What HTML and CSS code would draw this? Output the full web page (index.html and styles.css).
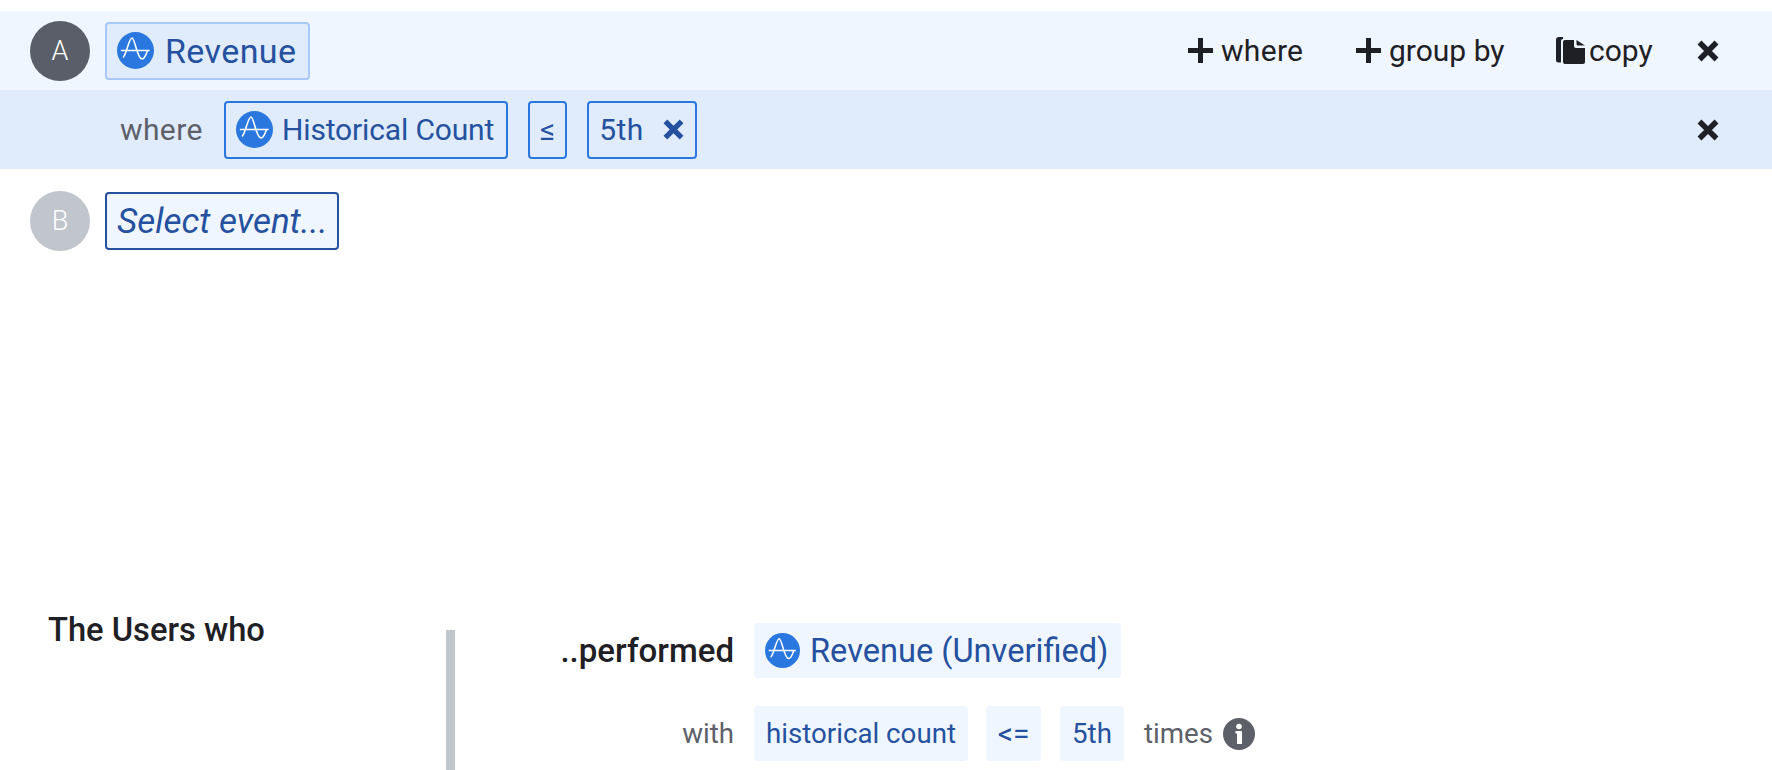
FILE: index.html
```html
<!DOCTYPE html>
<html lang="en">
<head>
  <meta charset="UTF-8" />
  <title>Segment</title>
  <link rel="stylesheet" href="styles.css">
</head>
<body>

  <svg class="defs" width="0" height="0" aria-hidden="true">
    <symbol id="logo" viewBox="0 0 37 37">
      <circle cx="18.500" cy="18.500" r="18.500" fill="#2a77e0" />
      <path d="M4.500 18.500H32M6.500 25C9.500 22 12 6 15 6C18 6 20 27 25 27C27.500 27 29 23 30.500 18.500" fill="none" stroke="#fff" stroke-width="1.600" stroke-linecap="round" />
    </symbol>
    <symbol id="plus" viewBox="0 0 25 25">
      <path d="M12.500 0v25M0 12.500h25" fill="none" stroke="currentColor" stroke-width="5" />
    </symbol>
    <symbol id="cross" viewBox="0 0 22 22">
      <path d="M2.500 2.500l17 17M19.500 2.500l-17 17" fill="none" stroke="currentColor" stroke-width="5.500" />
    </symbol>
    <symbol id="copy" viewBox="0 0 29 27">
      <path d="M7 0H3Q0 0 0 3v20q0 2.500 2.500 2.500H5V4q0-2 2-2z" fill="currentColor" />
      <path d="M9 3h9v6q0 2 2 2h9v14q0 2-2 2H9q-2 0-2-2V5q0-2 2-2zM20.500 3L29 8.500h-7q-1.500 0-1.500-1.500z" fill="currentColor" />
    </symbol>
  </svg>

  <main>

    <section class="row row-event">
      <span class="letter letter-a">A</span>
      <button type="button" class="chip chip-active">
        <svg class="logo"><use href="#logo" /></svg>Revenue
      </button>
      <div class="actions">
        <span class="action action-where"><svg class="plus"><use href="#plus" /></svg>where</span>
        <span class="action action-group"><svg class="plus"><use href="#plus" /></svg>group by</span>
        <span class="action action-copy"><svg class="copy"><use href="#copy" /></svg>copy</span>
        <svg class="cross"><use href="#cross" /></svg>
      </div>
    </section>

    <section class="row row-where">
      <span class="where-label">where</span>
      <button type="button" class="chip chip-small chip-prop">
        <svg class="logo"><use href="#logo" /></svg>Historical Count
      </button>
      <button type="button" class="chip chip-small chip-op">≤</button>
      <button type="button" class="chip chip-small chip-value">
        5th<svg class="cross-small"><use href="#cross" /></svg>
      </button>
      <svg class="cross cross-end"><use href="#cross" /></svg>
    </section>

    <section class="row-empty">
      <span class="letter letter-b">B</span>
      <button type="button" class="chip chip-select">Select event...</button>
    </section>

    <section class="summary">
      <h2>The Users who</h2>
      <div class="rule"></div>
      <div class="summary-rows">
        <div class="summary-row">
          <strong>..performed</strong>
          <span class="tag tag-event"><svg class="logo"><use href="#logo" /></svg>Revenue (Unverified)</span>
        </div>
        <div class="summary-row summary-row-small">
          <span class="muted">with</span>
          <span class="tag tag-prop">historical count</span>
          <span class="tag tag-op">&lt;=</span>
          <span class="tag tag-value">5th</span>
          <span class="muted">times</span>
          <svg class="info" viewBox="0 0 32 32">
            <circle cx="16" cy="16" r="16" fill="#5d6068" />
            <circle cx="16" cy="8.500" r="2.800" fill="#fff" />
            <path d="M12.500 13h5.500q1 0 1 1v12h-5V15.500h-1.500z" fill="#fff" />
          </svg>
        </div>
      </div>
    </section>

  </main>

</body>
</html>
```

FILE: styles.css
```css
* {
  box-sizing: border-box;
}

html, body {
  height: 770px;
  margin: 0;
  overflow: hidden;
  background: #fff;
}

body {
  --ink: #1e2025;
  --muted: #5d6068;
  --blue: #25519f;
  --blue-line: #2a77e0;

  color: var(--ink);
  font-family: Roboto, "Liberation Sans", sans-serif;
  font-size: 30px;
}

.defs {
  position: absolute;
}

button {
  font: inherit;
  cursor: pointer;
}

.row {
  display: flex;
  align-items: center;
  height: 79px;
}

.row-event {
  margin-top: 11px;
  padding-left: 30px;
  background: #eff6ff;
}

.row-where {
  padding-left: 120px;
  background: #e0ecfc;
}

.row-empty {
  display: flex;
  align-items: center;
  margin-top: 22px;
  padding-left: 30px;
}

.letter {
  display: flex;
  align-items: center;
  justify-content: center;
  width: 60px;
  height: 60px;
  border-radius: 50%;
  color: #fff;
  font-size: 27px;
  font-weight: 300;
}

.letter-a { background: #5a5e68; }
.letter-b { background: #c1c5cc; }

.chip {
  display: flex;
  align-items: center;
  height: 58px;
  margin: 0;
  padding: 0 12px 0 10px;
  border: 2px solid var(--blue-line);
  border-radius: 4px;
  background: transparent;
  color: var(--blue);
  white-space: nowrap;
}

.chip-active {
  margin-left: 15px;
  padding-right: 12px;
  border-color: #a8c8f5;
  background: #e0ecfc;
  font-size: 34px;
  letter-spacing: 0.4px;
}

.chip-select {
  margin-left: 15px;
  padding-right: 9px;
  border-color: var(--blue);
  background: #eff6ff;
  font-size: 35px;
  font-style: italic;
}

.logo {
  flex: none;
  width: 37px;
  height: 37px;
  margin-right: 11px;
}

.chip-small .logo {
  margin-right: 9px;
}

.chip-prop {
  letter-spacing: -0.15px;
}

.where-label {
  width: 82px;
  margin-right: 22px;
  color: var(--muted);
  letter-spacing: 0.4px;
}

.chip-op {
  margin-left: 20px;
  padding: 0;
  width: 39px;
  justify-content: center;
}

.chip-value {
  margin-left: 20px;
  padding-right: 11px;
  width: 110px;
  letter-spacing: 0.4px;
}

.cross-small {
  width: 21px;
  height: 21px;
  margin-left: auto;
}

.actions {
  display: flex;
  align-items: center;
  margin-left: auto;
  padding-right: 53px;
}

.action {
  display: flex;
  align-items: center;
  white-space: nowrap;
}

.action-where { width: 168px; letter-spacing: 0.3px; }
.action-group { width: 200px; }
.action-copy { width: 141px; }

.plus {
  width: 25px;
  height: 25px;
  margin-right: 8px;
}

.copy {
  width: 29px;
  height: 27px;
  margin-right: 4px;
}

.cross {
  width: 22px;
  height: 22px;
}

.cross-end {
  margin-left: auto;
  margin-right: 53px;
}

.summary {
  display: flex;
  margin-top: 361px;
  padding-left: 48px;
}

h2 {
  width: 398px;
  margin: 0;
  font-size: 32.700px;
  font-weight: 500;
  line-height: 36px;
}

.rule {
  width: 9px;
  height: 158px;
  margin-top: 18px;
  background: #c1c5cc;
}

.summary-rows {
  margin-top: 11px;
}

.summary-row {
  display: flex;
  align-items: center;
  height: 55px;
  margin-bottom: 28px;
}

.summary-row > strong,
.summary-row > .muted:first-child {
  width: 279px;
  margin-right: 20px;
  text-align: right;
}

.summary-row-small {
  font-size: 27.700px;
}

strong {
  font-size: 33px;
  font-weight: 500;
  white-space: nowrap;
}

.muted {
  color: var(--muted);
}

.tag {
  display: flex;
  align-items: center;
  height: 55px;
  border-radius: 4px;
  background: #eff6ff;
  color: var(--blue);
  white-space: nowrap;
}

.tag-event {
  padding: 0 13px 0 11px;
  font-size: 32.600px;
}

.tag .logo {
  width: 35px;
  height: 35px;
  margin-right: 10px;
}

.tag-prop,
.tag-op,
.tag-value {
  justify-content: center;
}

.tag-prop { width: 214px; margin-right: 18px; }
.tag-op { width: 55px; margin-right: 19px; font-size: 30px; }
.tag-value { width: 64px; margin-right: 20px; }

.info {
  width: 32px;
  height: 32px;
  margin-left: 10px;
}
```
